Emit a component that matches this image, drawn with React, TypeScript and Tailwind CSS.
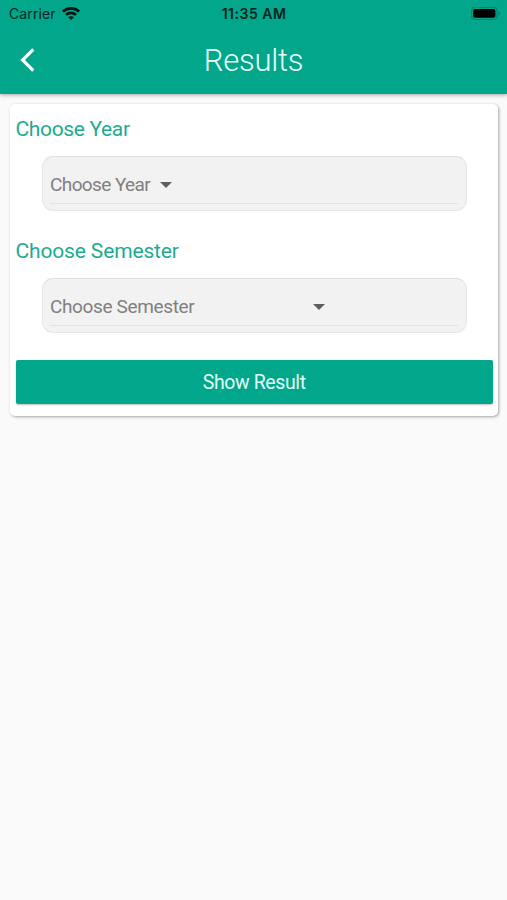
function StatusBar() {
  return (
    <div className="grid h-[27px] grid-cols-3 items-center pl-[9px] pr-1.5 font-['Inter','Liberation_Sans',sans-serif] text-[14px] text-[#07251f]">
      <div className="flex items-center gap-1.5">
        <span className="tracking-[0.1px]">Carrier</span>
        <svg className="h-[14px] w-[18px]" viewBox="0 0 18 14" fill="none" stroke="#021511" strokeWidth="2.7">
          <path d="M0.9 4.6C5.4 0.2 12.6 0.2 17.1 4.6" />
          <path d="M4 7.9C6.8 5.2 11.2 5.2 14 7.9" />
          <path d="M9 13.1L6.2 10.3C7.8 8.8 10.2 8.8 11.8 10.3Z" fill="#021511" stroke="none" />
        </svg>
      </div>
      <span className="-ml-[2px] text-center font-semibold tracking-[0.5px]">11:35 AM</span>
      <svg className="h-[14px] w-[30px] justify-self-end" viewBox="0 0 30 14" fill="none">
        <rect x="0.6" y="0.3" width="25.4" height="12.2" rx="3.5" stroke="#03826e" strokeWidth="1.2" />
        <rect x="2.2" y="2.1" width="22.2" height="8.6" rx="1.8" fill="#000" />
        <path d="M27.5 4.5C29.7 5.3 29.7 7.9 27.5 8.5Z" fill="#03826e" />
      </svg>
    </div>
  );
}

function SelectField({ label, wide }: { label: string; wide?: boolean }) {
  return (
    <section>
      <h2
        className={`h-[52px] pt-[11px] text-[21px] leading-[28px] text-[#1dab90] ${wide ? "tracking-[-0.15px]" : "tracking-[-0.35px]"}`}
      >
        {label}
      </h2>
      <button className="ml-[26px] flex h-[55px] w-[425px] flex-col rounded-[11px] border border-[#e7e7e7] border-t-[#dedede] bg-[#f2f2f2] pl-[7.5px] pr-2 text-left">
        <span
          className={`flex h-[47px] w-full items-center border-b border-[#e2e2e2] pt-[9px] text-[19px] leading-[28px] text-[#808080] ${wide ? "tracking-[-0.36px]" : "gap-[10px] tracking-[-0.6px]"}`}
        >
          <span className={wide ? "w-[263px]" : ""}>{label}</span>
          <svg className="h-[6px] w-3" viewBox="0 0 12 6" fill="#5e5e5e">
            <path d="M0 0H12L6 6Z" />
          </svg>
        </span>
      </button>
    </section>
  );
}

export default function App() {
  return (
    <div className="min-h-[900px] bg-[#fafafa] font-['Roboto','Liberation_Sans',sans-serif]">
      <header className="h-[94px] bg-[#02a68a] shadow-[0_1px_4px_rgba(0,0,0,0.35)]">
        <StatusBar />
        <div className="grid h-[67px] grid-cols-[60px_1fr_60px] items-center">
          <button aria-label="Back" className="pb-[2px] pl-5">
            <svg className="h-6 w-[15px]" viewBox="0 0 15 24" fill="none" stroke="#fff" strokeWidth="3.2">
              <path d="M13.3 1.3L2.6 12L13.3 22.7" />
            </svg>
          </button>
          <h1 className="text-center text-[31px] font-light leading-[40px] tracking-[-0.25px] text-[#e9fffa]">Results</h1>
        </div>
      </header>
      <main className="ml-[10px] mr-[9px] mt-[10px] h-[312px] rounded-[5px] bg-white pl-[5.5px] pr-[5px] shadow-[1px_1px_3px_rgba(0,0,0,0.35)]">
        <SelectField label="Choose Year" />
        <div className="h-[15px]" />
        <SelectField label="Choose Semester" wide />
        <button className="mt-[27px] h-[44px] w-full rounded-[2px] bg-[#02a68a] pt-px text-[19.5px] tracking-[-0.4px] text-[#e0fff8] shadow-[0_1px_2px_rgba(0,0,0,0.25)]">
          Show Result
        </button>
      </main>
    </div>
  );
}
